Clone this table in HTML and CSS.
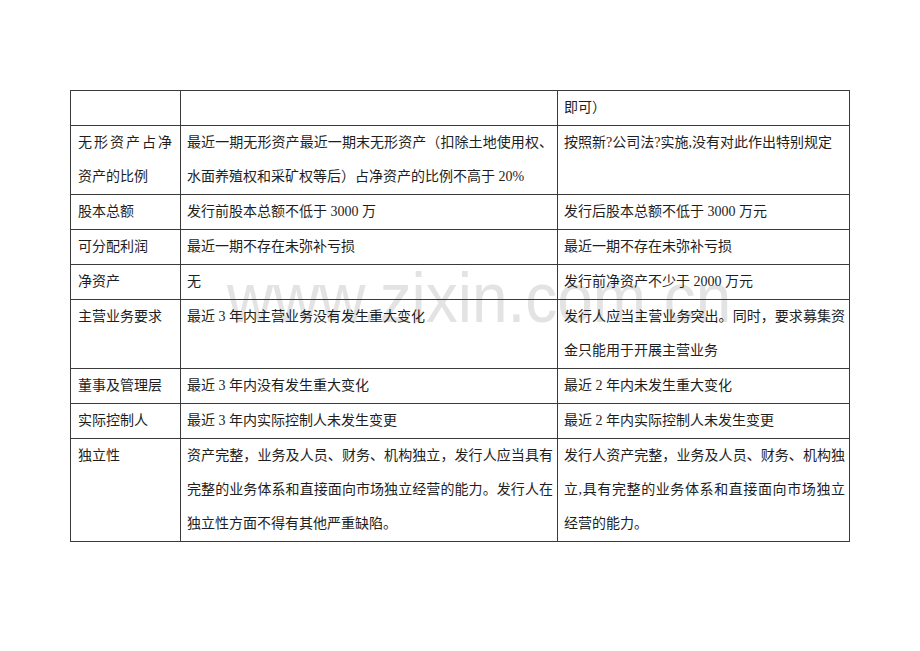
FILE: index.html
```html
<!DOCTYPE html>
<html lang="zh-CN">
<head>
<meta charset="utf-8">
<title>发行条件比较</title>
<link rel="stylesheet" href="styles.css">
</head>
<body>
<div class="page">
  <div class="watermark">www.zixin.com.cn</div>
  <table class="grid">
    <colgroup>
      <col class="c1">
      <col class="c2">
      <col class="c3">
    </colgroup>
    <tbody>
      <tr><td class="label"></td><td></td><td>即可）</td></tr>
      <tr><td class="label">无形资产占净资产的比例</td><td>最近一期无形资产最近一期末无形资产（扣除土地使用权、水面养殖权和采矿权等后）占净资产的比例不高于 20%</td><td>按照新?公司法?实施,没有对此作出特别规定</td></tr>
      <tr><td class="label">股本总额</td><td>发行前股本总额不低于 3000 万</td><td>发行后股本总额不低于 3000 万元</td></tr>
      <tr><td class="label">可分配利润</td><td>最近一期不存在未弥补亏损</td><td>最近一期不存在未弥补亏损</td></tr>
      <tr><td class="label">净资产</td><td>无</td><td>发行前净资产不少于 2000 万元</td></tr>
      <tr><td class="label">主营业务要求</td><td>最近 3 年内主营业务没有发生重大变化</td><td>发行人应当主营业务突出。同时，要求募集资金只能用于开展主营业务</td></tr>
      <tr><td class="label">董事及管理层</td><td>最近 3 年内没有发生重大变化</td><td>最近 2 年内未发生重大变化</td></tr>
      <tr><td class="label">实际控制人</td><td>最近 3 年内实际控制人未发生变更</td><td>最近 2 年内实际控制人未发生变更</td></tr>
      <tr><td class="label">独立性</td><td>资产完整，业务及人员、财务、机构独立，发行人应当具有完整的业务体系和直接面向市场独立经营的能力。发行人在独立性方面不得有其他严重缺陷。</td><td>发行人资产完整，业务及人员、财务、机构独立,具有完整的业务体系和直接面向市场独立经营的能力。</td></tr>
    </tbody>
  </table>
</div>
</body>
</html>
```
FILE: styles.css
```css
html, body {
  margin: 0;
  padding: 0;
  background: #ffffff;
}

.page {
  position: relative;
  padding: 90px 0 0 70px;
  font-family: "Liberation Serif", "Noto Sans CJK SC", serif;
  color: #1e1e1e;
}

.watermark {
  position: absolute;
  left: 227px;
  top: 262px;
  font-family: "Liberation Sans", sans-serif;
  font-size: 71px;
  line-height: 71px;
  color: #e3e3e3;
  white-space: nowrap;
  transform: scaleX(0.9);
  transform-origin: left top;
  z-index: 0;
}

.grid {
  position: relative;
  z-index: 1;
  border-collapse: collapse;
  table-layout: fixed;
  width: 779px;
}

.c1 { width: 110px; }
.c2 { width: 377px; }
.c3 { width: 292px; }

.grid td {
  border: 1px solid #3a3a3a;
  padding: 0 4px 0 6px;
  vertical-align: top;
  font-size: 14px;
  line-height: 34px;
  height: 34px;
  text-align: justify;
  word-break: break-all;
}

.grid td.label {
  padding-left: 7px;
  padding-right: 8px;
}
```
